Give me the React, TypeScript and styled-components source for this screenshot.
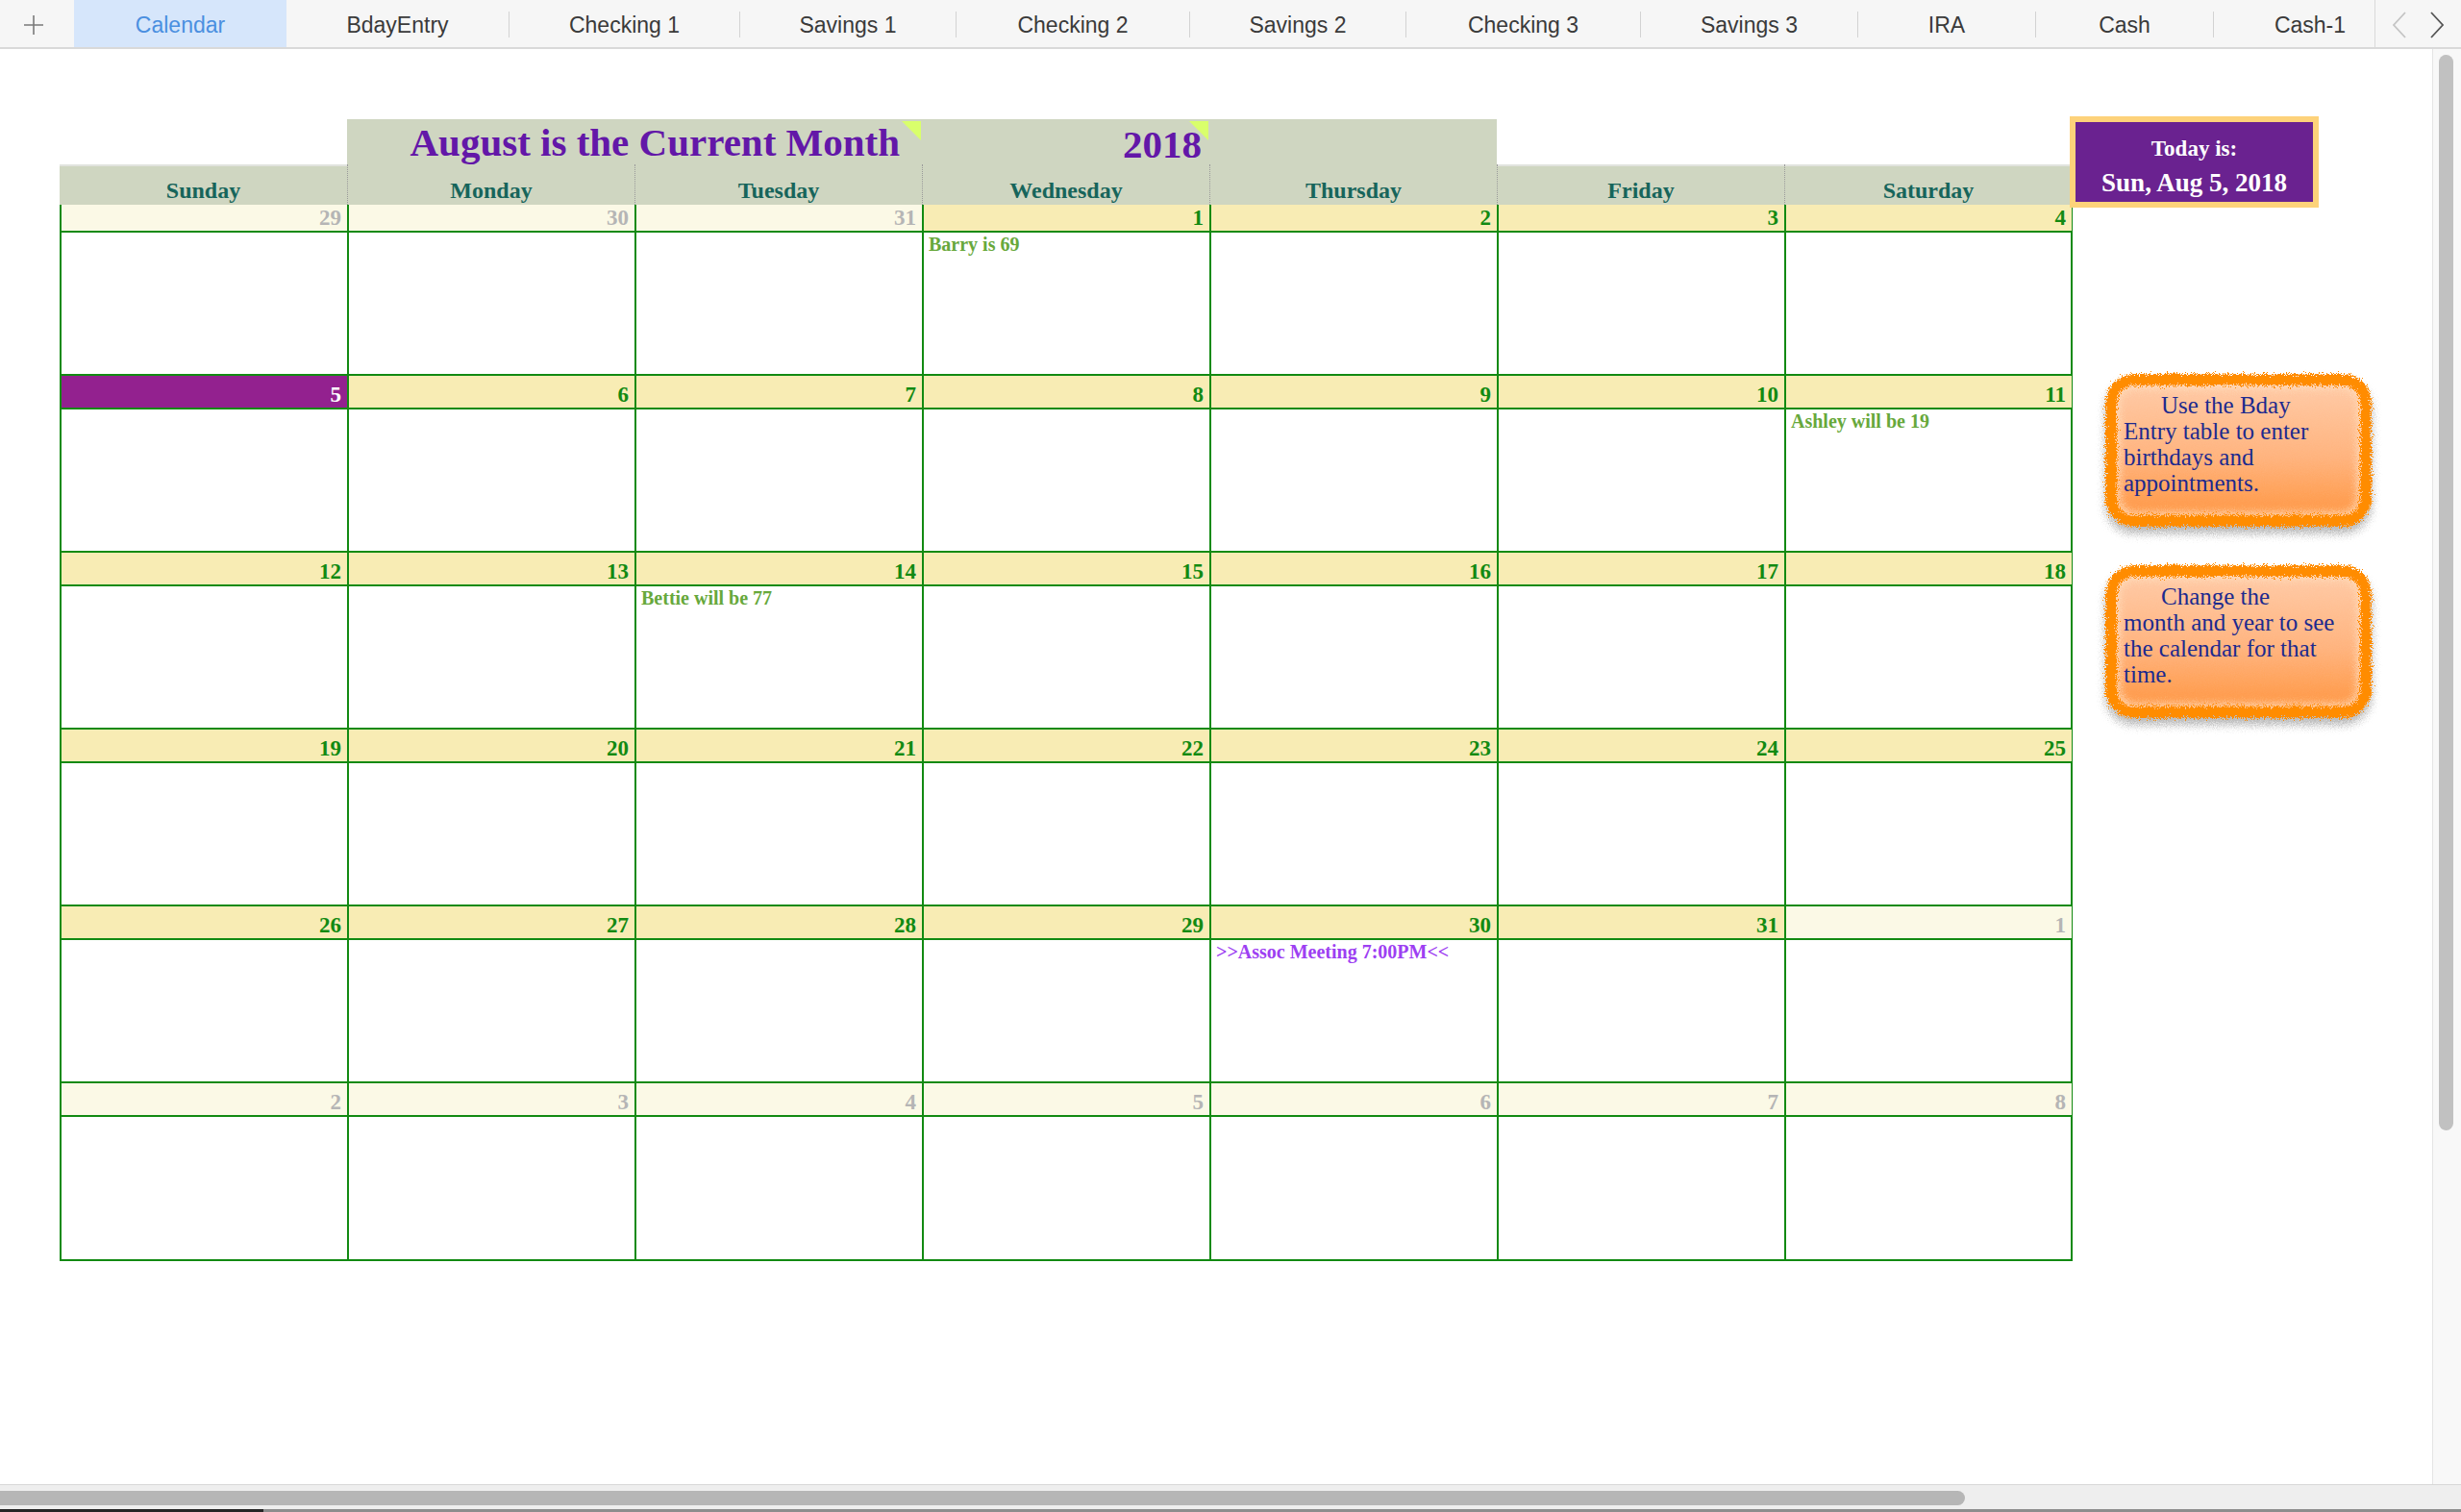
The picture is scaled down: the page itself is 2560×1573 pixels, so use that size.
import React from "react";
import styled, { createGlobalStyle } from "styled-components";

type DayKind = "in" | "out" | "today";

interface CalEvent {
  text: string;
  tone: "bday" | "meeting";
}

interface Day {
  num: number;
  kind: DayKind;
  event?: CalEvent;
}

const GREEN = "#128a12";
const SERIF = `"Liberation Serif", "Times New Roman", serif`;

const GlobalStyle = createGlobalStyle`
  html, body {
    margin: 0;
    padding: 0;
    width: 2560px;
    height: 1573px;
    overflow: hidden;
    background: #fff;
    font-family: "Liberation Sans", Arial, sans-serif;
  }
  * { box-sizing: border-box; }
`;

const Page = styled.div`
  width: 2560px;
  height: 1573px;
  display: flex;
  flex-direction: column;
`;

/* ---------- sheet tabs ---------- */

const TabBar = styled.div`
  height: 51px;
  flex: none;
  display: flex;
  align-items: stretch;
  background: #f6f6f6;
  border-bottom: 2px solid #d9d9d9;
`;

const PlusButton = styled.div`
  width: 77px;
  display: flex;
  align-items: center;
  justify-content: center;
  padding: 3px 8px 0 0;
`;

const TabStrip = styled.div`
  width: 2393px;
  display: flex;
  align-items: center;
  overflow: hidden;
`;

const Tab = styled.div<{ $w: number; $active?: boolean }>`
  flex: none;
  width: ${(p) => p.$w}px;
  height: 100%;
  display: flex;
  align-items: center;
  justify-content: center;
  padding-top: 3px;
  font-size: 23px;
  color: ${(p) => (p.$active ? "#4a8fe0" : "#3a3a3a")};
  background: ${(p) => (p.$active ? "#d6e6fb" : "transparent")};
  white-space: nowrap;
`;

const TabSep = styled.span`
  flex: none;
  width: 1px;
  height: 27px;
  margin-top: 2px;
  background: #d3d3d3;
`;

const ArrowBox = styled.div`
  flex: 1;
  display: flex;
  align-items: center;
  justify-content: space-around;
  border-left: 1px solid #dadada;
  padding: 2px 6px 0;
`;

/* ---------- main area ---------- */

const Main = styled.div`
  flex: 1;
  display: flex;
  min-height: 0;
`;

const Sheet = styled.div`
  position: relative;
  flex: 1;
  padding: 73px 0 0 62px;
  background: #fff;
`;

const VScroll = styled.div`
  width: 30px;
  flex: none;
  background: #f8f8f8;
  border-left: 1px solid #e4e4e4;
  padding: 6px 0 0 6px;
`;

const VThumb = styled.div`
  width: 15px;
  height: 1119px;
  border-radius: 8px;
  background: #c1c1c1;
`;

const HScroll = styled.div`
  height: 26px;
  flex: none;
  background: #eeeeee;
  border-top: 1px solid #d8d8d8;
  padding-top: 6px;
`;

const HThumb = styled.div`
  width: 2044px;
  height: 15px;
  border-radius: 0 8px 8px 0;
  background: #b6b6b6;
`;

const Dock = styled.div`
  height: 3px;
  flex: none;
  background: linear-gradient(90deg, #262626 0, #262626 274px, #8d8d8d 274px);
`;

/* ---------- calendar ---------- */

const Calendar = styled.div`
  width: 2094px;
  font-family: ${SERIF};
`;

const SevenCols = styled.div`
  display: grid;
  grid-template-columns: repeat(7, 299px);
`;

const TitleRow = styled(SevenCols)`
  height: 47px;
`;

const TitleCell = styled.div<{ $span?: number; $band?: boolean; $pad?: number; $top?: number; $note?: boolean }>`
  position: relative;
  grid-column: span ${(p) => p.$span ?? 1};
  background: ${(p) => (p.$band ? "#cfd6c1" : "transparent")};
  display: flex;
  justify-content: flex-end;
  align-items: flex-start;
  padding: ${(p) => p.$top ?? 0}px ${(p) => p.$pad ?? 0}px 0 0;
  font-size: 41px;
  line-height: 1;
  font-weight: bold;
  color: #6317a8;
  white-space: nowrap;

  ${(p) =>
    p.$note &&
    `
    &::after {
      content: "";
      position: absolute;
      top: 2px;
      right: 1px;
      border-top: 20px solid #d9ff6b;
      border-left: 20px solid transparent;
    }
  `}
`;

const DayRow = styled(SevenCols)`
  height: 42px;
`;

const DayName = styled.div<{ $first?: boolean; $exposed?: boolean }>`
  background: #cfd6c1;
  border-left: ${(p) => (p.$first ? "none" : "1px dotted #9a9a9a")};
  box-shadow: ${(p) => (p.$exposed ? "inset 0 2px 0 #e1e3de" : "none")};
  text-align: center;
  padding-top: 15px;
  font-size: 24px;
  line-height: 1;
  font-weight: bold;
  color: #17655b;
`;

const Week = styled(SevenCols)<{ $last?: boolean }>`
  border-right: 2px solid ${GREEN};
  border-bottom: ${(p) => (p.$last ? `2px solid ${GREEN}` : "none")};
`;

const DayCell = styled.div`
  display: flex;
  flex-direction: column;
  border-left: 2px solid ${GREEN};
`;

const BAR_BG: Record<DayKind, string> = {
  in: "#f8ecb4",
  out: "#fbf9e6",
  today: "#93218f",
};

const NUM_COLOR: Record<DayKind, string> = {
  in: GREEN,
  out: "#b5b5b5",
  today: "#ffffff",
};

const DateBar = styled.div<{ $kind: DayKind; $first?: boolean }>`
  height: ${(p) => (p.$first ? 29 : 37)}px;
  background: ${(p) => BAR_BG[p.$kind]};
  border-top: ${(p) => (p.$first ? "none" : `2px solid ${GREEN}`)};
  border-bottom: 2px solid ${GREEN};
  display: flex;
  justify-content: flex-end;
  align-items: flex-end;
  padding: 0 6px 2px 0;
  font-size: 23px;
  line-height: 23px;
  font-weight: bold;
  color: ${(p) => NUM_COLOR[p.$kind]};
`;

const DayBody = styled.div<{ $last?: boolean }>`
  height: ${(p) => (p.$last ? 148 : 147)}px;
  padding: 1px 5px 0;
`;

const EventText = styled.div<{ $tone: CalEvent["tone"] }>`
  font-size: 20px;
  line-height: 22px;
  font-weight: bold;
  white-space: nowrap;
  color: ${(p) => (p.$tone === "meeting" ? "#9d40f2" : "#67a83b")};
`;

/* ---------- floating shapes ---------- */

const TodayBox = styled.div`
  position: absolute;
  left: 2153px;
  top: 70px;
  width: 259px;
  height: 95px;
  border: 6px solid #fdd27a;
  background: #6a2290;
  color: #fff;
  font-family: ${SERIF};
  font-weight: bold;
  text-align: center;
  padding-top: 14px;
`;

const TodayLabel = styled.div`
  font-size: 23px;
  line-height: 28px;
`;

const TodayDate = styled.div`
  margin-top: 4px;
  font-size: 27px;
  line-height: 34px;
  white-space: nowrap;
`;

const Note = styled.div<{ $top: number }>`
  position: absolute;
  left: 2190px;
  top: ${(p) => p.$top}px;
  width: 277px;
  height: 159px;
  padding: 19px 0 0 19px;
  font-family: ${SERIF};
  font-size: 25px;
  line-height: 27px;
  color: #1c2a8e;

  &::before {
    content: "";
    position: absolute;
    inset: 0;
    border-radius: 30px;
    border: 12px solid #ff8c05;
    background: linear-gradient(180deg, #ffcaa6 0%, #ffb47f 55%, #ff9845 100%);
    box-shadow: inset 0 0 9px 3px rgba(255, 220, 185, 0.9), 0 7px 9px rgba(0, 0, 0, 0.28);
    filter: url(#rough-edge);
  }
`;

const NoteLine = styled.div<{ $indent?: boolean }>`
  position: relative;
  white-space: nowrap;
  padding-left: ${(p) => (p.$indent ? 39 : 0)}px;
`;

/* ---------- data ---------- */

const EVENTS: Record<number, CalEvent> = {
  1: { text: "Barry is 69", tone: "bday" },
  11: { text: "Ashley will be 19", tone: "bday" },
  14: { text: "Bettie will be 77", tone: "bday" },
  30: { text: ">>Assoc Meeting 7:00PM<<", tone: "meeting" },
};

const buildWeeks = (): Day[][] => {
  const days: Day[] = [];
  [29, 30, 31].forEach((n) => days.push({ num: n, kind: "out" }));
  for (let n = 1; n <= 31; n++) {
    days.push({ num: n, kind: n === 5 ? "today" : "in", event: EVENTS[n] });
  }
  for (let n = 1; n <= 8; n++) days.push({ num: n, kind: "out" });
  const weeks: Day[][] = [];
  for (let i = 0; i < days.length; i += 7) weeks.push(days.slice(i, i + 7));
  return weeks;
};

const WEEKS = buildWeeks();
const DAY_NAMES = ["Sunday", "Monday", "Tuesday", "Wednesday", "Thursday", "Friday", "Saturday"];

const TABS = [
  { label: "Calendar", w: 221, active: true },
  { label: "BdayEntry", w: 231 },
  { label: "Checking 1", w: 239 },
  { label: "Savings 1", w: 224 },
  { label: "Checking 2", w: 242 },
  { label: "Savings 2", w: 224 },
  { label: "Checking 3", w: 243 },
  { label: "Savings 3", w: 225 },
  { label: "IRA", w: 184 },
  { label: "Cash", w: 184 },
  { label: "Cash-1", w: 200 },
];

/* ---------- pieces ---------- */

const PlusIcon = () => (
  <svg width="22" height="22" viewBox="0 0 22 22">
    <path d="M11 1v20M1 11h20" stroke="#7a7a7a" strokeWidth="1.6" />
  </svg>
);

const Chevron = ({ dir, color }: { dir: "left" | "right"; color: string }) => (
  <svg width="16" height="28" viewBox="0 0 16 28">
    <polyline
      points={dir === "left" ? "14,1 2,14 14,27" : "2,1 14,14 2,27"}
      fill="none"
      stroke={color}
      strokeWidth="1.8"
    />
  </svg>
);

const RoughFilter = () => (
  <svg width="0" height="0" style={{ position: "absolute" }} aria-hidden>
    <filter id="rough-edge" x="-10%" y="-10%" width="120%" height="130%">
      <feTurbulence type="fractalNoise" baseFrequency="0.9" numOctaves="3" seed="7" result="noise" />
      <feDisplacementMap in="SourceGraphic" in2="noise" scale="12" xChannelSelector="R" yChannelSelector="G" />
    </filter>
  </svg>
);

const SheetTabs = () => (
  <TabBar>
    <PlusButton>
      <PlusIcon />
    </PlusButton>
    <TabStrip>
      {TABS.map((t, i) => (
        <React.Fragment key={t.label}>
          {i >= 2 && <TabSep />}
          <Tab $w={t.w} $active={t.active}>
            {t.label}
          </Tab>
        </React.Fragment>
      ))}
    </TabStrip>
    <ArrowBox>
      <Chevron dir="left" color="#c4c4c4" />
      <Chevron dir="right" color="#555" />
    </ArrowBox>
  </TabBar>
);

const MonthCalendar = () => (
  <Calendar>
    <TitleRow>
      <TitleCell />
      <TitleCell $span={2} $band $pad={23} $top={4} $note>
        August is the Current Month
      </TitleCell>
      <TitleCell $band $pad={8} $top={6} $note>
        2018
      </TitleCell>
      <TitleCell $band />
      <TitleCell />
      <TitleCell />
    </TitleRow>
    <DayRow>
      {DAY_NAMES.map((d, i) => (
        <DayName key={d} $first={i === 0} $exposed={i === 0 || i >= 5}>
          {d}
        </DayName>
      ))}
    </DayRow>
    {WEEKS.map((week, wi) => (
      <Week key={wi} $last={wi === WEEKS.length - 1}>
        {week.map((day, di) => (
          <DayCell key={di}>
            <DateBar $kind={day.kind} $first={wi === 0}>
              {day.num}
            </DateBar>
            <DayBody $last={wi === WEEKS.length - 1}>
              {day.event && <EventText $tone={day.event.tone}>{day.event.text}</EventText>}
            </DayBody>
          </DayCell>
        ))}
      </Week>
    ))}
  </Calendar>
);

const App = () => {
  return (
    <Page>
      <GlobalStyle />
      <RoughFilter />
      <SheetTabs />
      <Main>
        <Sheet>
          <MonthCalendar />
          <TodayBox>
            <TodayLabel>Today is:</TodayLabel>
            <TodayDate>Sun, Aug 5, 2018</TodayDate>
          </TodayBox>
          <Note $top={338}>
            <NoteLine $indent>Use the Bday</NoteLine>
            <NoteLine>Entry table to enter</NoteLine>
            <NoteLine>birthdays and</NoteLine>
            <NoteLine>appointments.</NoteLine>
          </Note>
          <Note $top={537}>
            <NoteLine $indent>Change the</NoteLine>
            <NoteLine>month and year to see</NoteLine>
            <NoteLine>the calendar for that</NoteLine>
            <NoteLine>time.</NoteLine>
          </Note>
        </Sheet>
        <VScroll>
          <VThumb />
        </VScroll>
      </Main>
      <HScroll>
        <HThumb />
      </HScroll>
      <Dock />
    </Page>
  );
};

export default App;
